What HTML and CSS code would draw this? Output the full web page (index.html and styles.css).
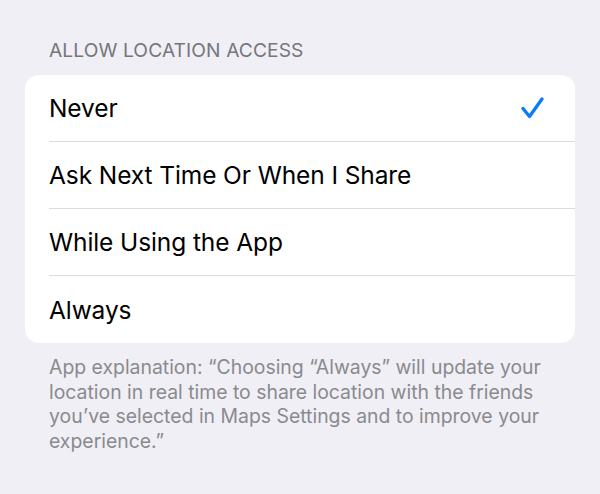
FILE: index.html
```html
<!DOCTYPE html>
<html lang="en">
<head>
<meta charset="utf-8">
<title>Location</title>
<link rel="stylesheet" href="styles.css">
</head>
<body>
  <main class="page">
    <section class="group">
      <h2 class="group-title">ALLOW LOCATION ACCESS</h2>
      <ul class="card">
        <li class="row">
          <span class="label">Never</span>
          <svg class="check" viewBox="0 0 24 22" width="24" height="22" aria-hidden="true">
            <path d="M3 11.5 L9.5 19.5 L22 2" fill="none" stroke="#0a7aff" stroke-width="3.3" stroke-linecap="round" stroke-linejoin="round"/>
          </svg>
        </li>
        <li class="row"><span class="label">Ask Next Time Or When I Share</span></li>
        <li class="row"><span class="label">While Using the App</span></li>
        <li class="row"><span class="label">Always</span></li>
      </ul>
      <p class="group-footer">App explanation: “Choosing “Always” will update your location in real time to share location with the friends you’ve selected in Maps Settings and to improve your experience.”</p>
    </section>
  </main>
</body>
</html>
```

FILE: styles.css
```css
html, body {
  margin: 0;
  padding: 0;
}

body {
  background: #f0eff5;
  font-family: Inter, "Noto Sans", sans-serif;
  -webkit-font-smoothing: antialiased;
}

.page {
  padding: 38px 25px 0 25px;
}

.group-title {
  margin: 0 0 13px 24px;
  font-size: 19.2px;
  font-weight: 400;
  color: #76767b;
  letter-spacing: 0.1px;
  line-height: 24px;
}

.card {
  list-style: none;
  margin: 0;
  padding: 0;
  background: #ffffff;
  border-radius: 14px;
  overflow: hidden;
}

.row {
  height: 67px;
  margin-left: 24px;
  padding-right: 31px;
  display: flex;
  align-items: center;
  justify-content: space-between;
  border-bottom: 1px solid #dcdce0;
  box-sizing: border-box;
}

.row:last-child {
  border-bottom: none;
}

.label {
  font-size: 24.5px;
  color: #000000;
  letter-spacing: -0.1px;
}

.check {
  display: block;
}

.group-footer {
  margin: 12px 24px 0 24px;
  font-size: 19.4px;
  line-height: 24.5px;
  color: #8a8a8e;
}
```
